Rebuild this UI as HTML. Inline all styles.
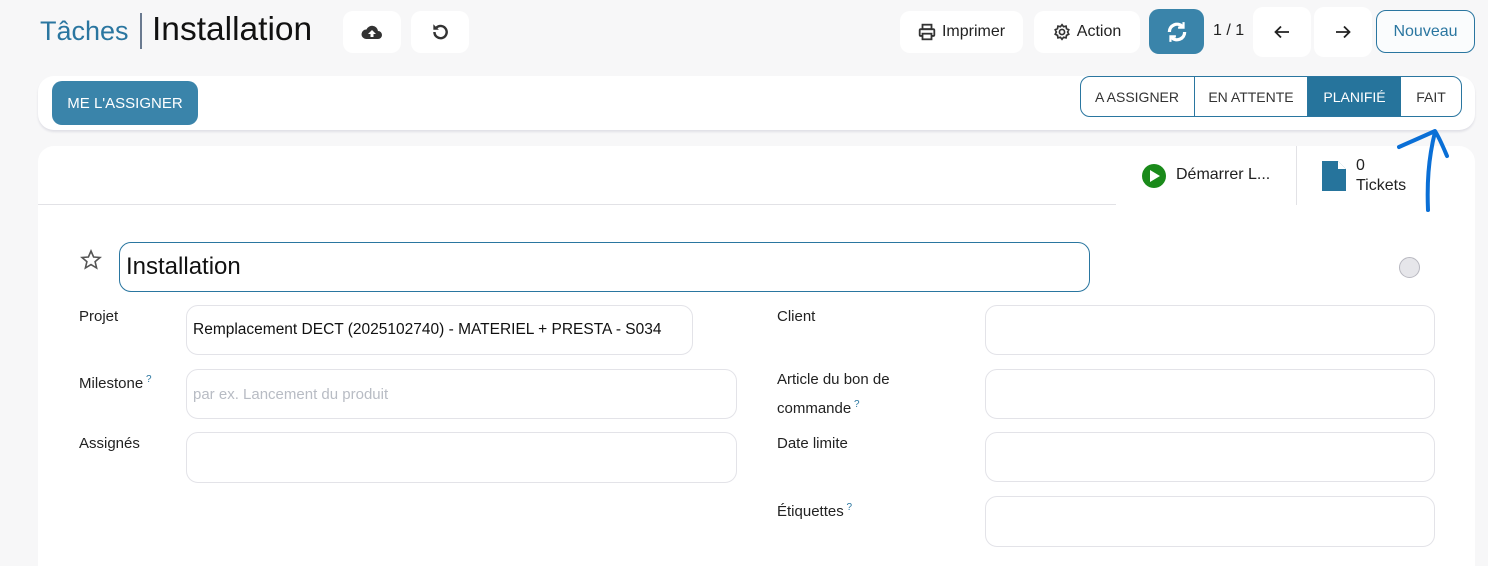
<!DOCTYPE html><html><head><meta charset="utf-8"><style>
*{box-sizing:border-box;margin:0;padding:0}
body{width:1488px;height:558px;background:#f7f7f8;font-family:"Liberation Sans",sans-serif;color:#222;position:relative;overflow:hidden}
.a{position:absolute}
.btn{position:absolute;background:#fff;border-radius:10px;display:flex;align-items:center;justify-content:center;font-size:16px;color:#222;gap:6px}
.inp{position:absolute;border:1px solid #e3e3e8;border-radius:12px;background:#fff;font-size:16px;display:flex;align-items:center;padding-left:6px}
.lbl{position:absolute;font-size:15px;color:#222;line-height:26px}
.q{color:#2a76a0;font-size:10px;vertical-align:super}
.st{position:absolute;top:76px;height:41px;display:flex;align-items:center;justify-content:center;font-size:14px;color:#333;border-left:1px solid #2a76a0}
</style></head><body>
<div class="a" style="left:40px;top:16px;font-size:27px;color:#2a76a0">Tâches</div>
<div class="a" style="left:140px;top:13px;width:2px;height:36px;background:#6a7a90"></div>
<div class="a" style="left:152px;top:11px;font-size:33.5px;color:#111">Installation</div>
<div class="btn" style="left:343px;top:11px;width:58px;height:42px"><svg width="22" height="18" viewBox="0 0 22 18"><path d="M5 16h12a4 4 0 0 0 0-8 6 6 0 0 0-11.5-1.5A4.5 4.5 0 0 0 5 16z" fill="#333"/><path d="M11 7l-4 4h2.5v3h3v-3H15z" fill="#fff"/></svg></div>
<div class="btn" style="left:411px;top:11px;width:58px;height:42px"><svg width="20" height="20" viewBox="0 0 18 18"><path d="M4 9a5.5 5.5 0 1 0 1.8-4" fill="none" stroke="#333" stroke-width="2.2"/><path d="M3 2v5h5z" fill="#333"/></svg></div>
<div class="btn" style="left:900px;top:11px;width:123px;height:42px"><svg width="18" height="18" viewBox="0 0 16 16" fill="none" stroke="#333" stroke-width="1.6"><rect x="4" y="1.5" width="8" height="4"/><rect x="1.5" y="5.5" width="13" height="6" rx="1"/><rect x="4" y="9.5" width="8" height="5" fill="#fff"/></svg>Imprimer</div>
<div class="btn" style="left:1034px;top:11px;width:106px;height:42px"><svg width="18" height="18" viewBox="0 0 16 16" fill="none" stroke="#333" stroke-width="1.5"><circle cx="8" cy="8" r="2.3"/><path d="M8 1.5l1.4 1.8 2.2-.5.4 2.2 2 1-1 2 1 2-2 1-.4 2.2-2.2-.5L8 14.5l-1.4-1.8-2.2.5-.4-2.2-2-1 1-2-1-2 2-1 .4-2.2 2.2.5z"/></svg>Action</div>
<div class="btn" style="left:1149px;top:9px;width:55px;height:45px;background:#3a84aa"><svg width="24" height="24" viewBox="0 0 22 22" fill="none" stroke="#fff" stroke-width="3"><path d="M4 11a7 7 0 0 1 12-5"/><path d="M18 11a7 7 0 0 1-12 5"/><path d="M17 2v5h-5M5 20v-5h5" stroke-width="2"/></svg></div>
<div class="a" style="left:1213px;top:22px;font-size:16px">1 / 1</div>
<div class="btn" style="left:1253px;top:7px;width:58px;height:50px"><svg width="16" height="14" viewBox="0 0 16 14" fill="none" stroke="#222" stroke-width="1.8"><path d="M15 7H2M7 1.5L1.5 7 7 12.5"/></svg></div>
<div class="btn" style="left:1314px;top:7px;width:58px;height:50px"><svg width="16" height="14" viewBox="0 0 16 14" fill="none" stroke="#222" stroke-width="1.8"><path d="M1 7h13M9 1.5L14.5 7 9 12.5"/></svg></div>
<div class="btn" style="left:1376px;top:10px;width:99px;height:43px;border:1px solid #2a76a0;color:#2a76a0;background:#fafcfd">Nouveau</div>

<div class="a" style="left:38px;top:76px;width:1437px;height:54px;background:#fff;border-radius:16px;box-shadow:0 2px 2px #e0e0e6"></div>
<div class="a" style="left:52px;top:81px;width:146px;height:44px;background:#3a84aa;border-radius:10px;color:#fff;font-size:15px;display:flex;align-items:center;justify-content:center">ME L'ASSIGNER</div>
<div class="a" style="left:1080px;top:76px;width:382px;height:41px;border:1px solid #2a76a0;border-radius:10px;overflow:hidden"></div>
<div class="st" style="left:1080px;width:114px;border-left:none">A ASSIGNER</div>
<div class="st" style="left:1194px;width:113px">EN ATTENTE</div>
<div class="st" style="left:1307px;width:94px;background:#26749c;color:#fff;top:77px;height:39px">PLANIFIÉ</div>
<div class="st" style="left:1401px;width:60px;border-left:none">FAIT</div>

<div class="a" style="left:38px;top:146px;width:1437px;height:420px;background:#fff;border-radius:16px 16px 0 0"></div>
<div class="a" style="left:38px;top:204px;width:1078px;height:1px;background:#e2e2e6"></div>
<div class="a" style="left:1296px;top:146px;width:1px;height:59px;background:#e2e2e6"></div>
<div class="a" style="left:1142px;top:164px;width:24px;height:24px;border-radius:50%;background:#1a8a1a"></div>
<div class="a" style="left:1150px;top:170px;width:0;height:0;border-left:10px solid #fff;border-top:6px solid transparent;border-bottom:6px solid transparent"></div>
<div class="a" style="left:1176px;top:166px;font-size:16px">Démarrer L...</div>
<svg class="a" style="left:1322px;top:161px" width="26" height="30" viewBox="0 0 26 30"><path d="M0 0h16l8 8v22H0z" fill="#26749c"/><path d="M16 0v8h8" fill="#fff"/></svg>
<div class="a" style="left:1356px;top:156px;font-size:16px;line-height:20px">0<br>Tickets</div>

<svg class="a" style="left:80px;top:249px" width="22" height="22" viewBox="0 0 22 22"><path d="M11 2l2.6 6 6.4.5-4.9 4.2 1.5 6.3L11 15.6 5.4 19l1.5-6.3L2 8.5 8.4 8z" fill="none" stroke="#555" stroke-width="1.6"/></svg>
<div class="inp" style="left:119px;top:242px;width:971px;height:50px;border-color:#2a76a0;font-size:24px;color:#111">Installation</div>
<div class="a" style="left:1399px;top:257px;width:21px;height:21px;border-radius:50%;background:#e6e6ea;border:1px solid #b8b8c0"></div>

<div class="lbl" style="left:79px;top:304px">Projet</div>
<div class="inp" style="left:186px;top:305px;width:507px;height:50px;font-size:15.5px;color:#111">Remplacement DECT (2025102740) - MATERIEL + PRESTA - S034</div>
<div class="lbl" style="left:79px;top:367px">Milestone<span class="q"> ?</span></div>
<div class="inp" style="left:186px;top:369px;width:551px;height:50px;color:#b8bcc4;font-size:15px">par ex. Lancement du produit</div>
<div class="lbl" style="left:79px;top:431px">Assignés</div>
<div class="inp" style="left:186px;top:432px;width:551px;height:51px"></div>

<div class="lbl" style="left:777px;top:304px">Client</div>
<div class="inp" style="left:985px;top:305px;width:450px;height:50px"></div>
<div class="lbl" style="left:777px;top:367px;line-height:25px">Article du bon de<br>commande<span class="q"> ?</span></div>
<div class="inp" style="left:985px;top:369px;width:450px;height:50px"></div>
<div class="lbl" style="left:777px;top:431px">Date limite</div>
<div class="inp" style="left:985px;top:432px;width:450px;height:50px"></div>
<div class="lbl" style="left:777px;top:495px">Étiquettes<span class="q"> ?</span></div>
<div class="inp" style="left:985px;top:496px;width:450px;height:51px"></div>

<svg class="a" style="left:1390px;top:125px" width="70" height="95" viewBox="0 0 70 95"><path d="M38 85C37 60 38 35 45 7M9 22C20 17 32 12 45 6 50 14 54 24 57 31" fill="none" stroke="#0a6fd6" stroke-width="4" stroke-linecap="round" stroke-linejoin="round"/></svg>
</body></html>
